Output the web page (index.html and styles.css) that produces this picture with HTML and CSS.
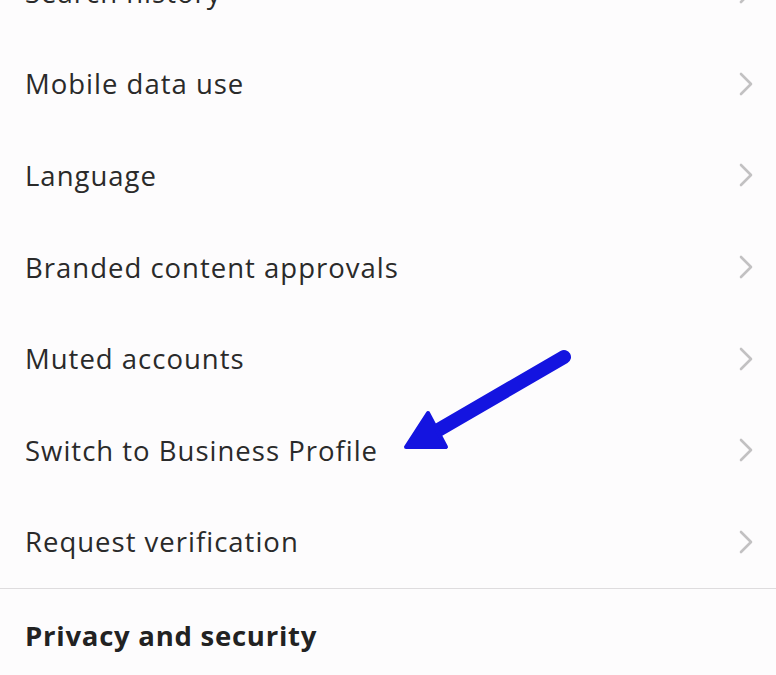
FILE: index.html
```html
<!DOCTYPE html>
<html lang="en">
<head>
    <meta charset="UTF-8">
    <title>Settings</title>
    <link rel="stylesheet" href="styles.css">
</head>
<body>
<div class="screen">
    <ul class="menu">
        <li class="menu-item"><span>Search history</span><svg class="chev" viewBox="0 0 14 24"><polyline points="2,2 12,12 2,22"/></svg></li>
        <li class="menu-item"><span>Mobile data use</span><svg class="chev" viewBox="0 0 14 24"><polyline points="2,2 12,12 2,22"/></svg></li>
        <li class="menu-item"><span>Language</span><svg class="chev" viewBox="0 0 14 24"><polyline points="2,2 12,12 2,22"/></svg></li>
        <li class="menu-item"><span>Branded content approvals</span><svg class="chev" viewBox="0 0 14 24"><polyline points="2,2 12,12 2,22"/></svg></li>
        <li class="menu-item"><span>Muted accounts</span><svg class="chev" viewBox="0 0 14 24"><polyline points="2,2 12,12 2,22"/></svg></li>
        <li class="menu-item"><span>Switch to Business Profile</span><svg class="chev" viewBox="0 0 14 24"><polyline points="2,2 12,12 2,22"/></svg></li>
        <li class="menu-item"><span>Request verification</span><svg class="chev" viewBox="0 0 14 24"><polyline points="2,2 12,12 2,22"/></svg></li>
    </ul>
    <div class="section-title">Privacy and security</div>

    <!-- annotation arrow drawn over the list -->
    <svg class="pointer" viewBox="0 0 776 675" width="776" height="675">
        <line x1="564" y1="357" x2="428" y2="436" />
        <polygon points="406,447 428,413 446,447" />
    </svg>
</div>
</body>
</html>
```
FILE: styles.css
```css
html, body {
    margin: 0;
    padding: 0;
    background: #fdfcfd;
}

body {
    font-family: "Open Sans", "Liberation Sans", sans-serif;
    color: #2a2a2a;
    overflow: hidden;
}

.screen {
    position: relative;
    width: 776px;
    height: 675px;
    overflow: hidden;
}

.menu {
    list-style: none;
    margin: -53.5px 0 0 0;
    padding: 0;
    border-bottom: 1.5px solid #dedcde;
}

.menu-item {
    display: flex;
    align-items: center;
    justify-content: space-between;
    height: 91.6px;
    padding: 0 23px 0 25px;
    font-size: 27.5px;
    letter-spacing: 1px;
}

.chev {
    width: 14px;
    height: 24px;
}

.chev polyline {
    fill: none;
    stroke: #c2c1c2;
    stroke-width: 2.6;
    stroke-linecap: round;
    stroke-linejoin: round;
}

.section-title {
    padding: 0 25px;
    height: 94px;
    display: flex;
    align-items: center;
    font-size: 27.5px;
    letter-spacing: 0.75px;
    font-weight: 700;
    color: #222;
}

.pointer {
    position: absolute;
    left: 0;
    top: 0;
    pointer-events: none;
}

.pointer line {
    stroke: #1414e0;
    stroke-width: 14;
    stroke-linecap: round;
}

.pointer polygon {
    fill: #1414e0;
    stroke: #1414e0;
    stroke-width: 4;
    stroke-linejoin: round;
}
```
